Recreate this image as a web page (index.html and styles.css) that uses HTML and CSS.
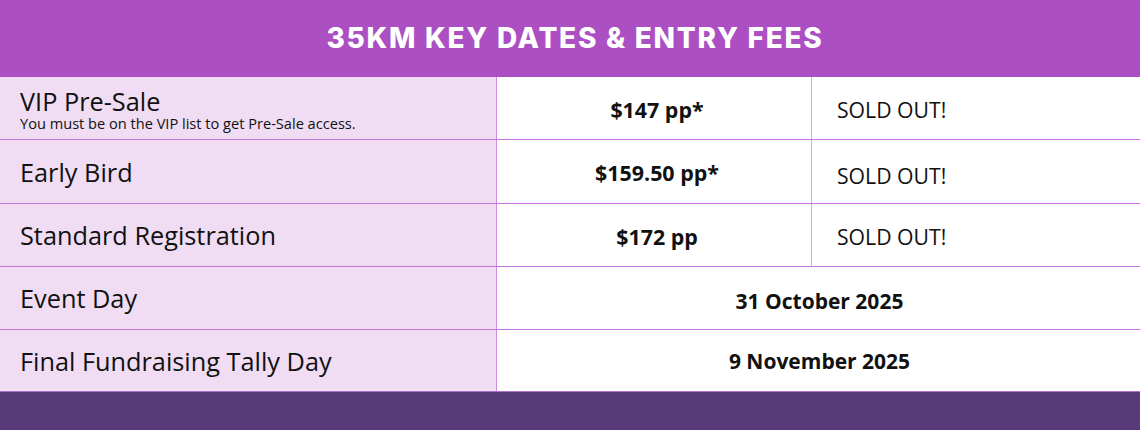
FILE: index.html
```html
<!DOCTYPE html>
<html lang="en">
<head>
<meta charset="utf-8">
<title>35KM Key Dates &amp; Entry Fees</title>
<link rel="stylesheet" href="styles.css">
</head>
<body>
<div class="page">
  <header class="head"><h1>35KM KEY DATES &amp; ENTRY FEES</h1></header>
  <div class="table">
    <div class="row">
      <div class="label first"><div class="main">VIP Pre-Sale</div><div class="note">You must be on the VIP list to get Pre-Sale access.</div></div>
      <div class="price">$147 pp*</div>
      <div class="status">SOLD OUT!</div>
    </div>
    <div class="row">
      <div class="label"><div class="main">Early Bird</div></div>
      <div class="price">$159.50 pp*</div>
      <div class="status low">SOLD OUT!</div>
    </div>
    <div class="row">
      <div class="label"><div class="main">Standard Registration</div></div>
      <div class="price">$172 pp</div>
      <div class="status">SOLD OUT!</div>
    </div>
    <div class="row wide">
      <div class="label"><div class="main">Event Day</div></div>
      <div class="date down">31 October 2025</div>
    </div>
    <div class="row wide last">
      <div class="label"><div class="main">Final Fundraising Tally Day</div></div>
      <div class="date">9 November 2025</div>
    </div>
  </div>
  <footer class="foot"></footer>
</div>
</body>
</html>
```
FILE: styles.css
```css
* { box-sizing: border-box; }
html, body { margin: 0; padding: 0; }
body { width: 1140px; height: 430px; overflow: hidden; background: #ffffff; font-family: "Open Sans", "Liberation Sans", sans-serif; color: #111; }
.page { display: flex; flex-direction: column; height: 430px; }
.head { height: 77px; background: #ab4fc3; display: flex; align-items: center; justify-content: center; padding-left: 10px; }
.head h1 { margin: 0; color: #fff; font-family: Inter, "Liberation Sans", sans-serif; font-weight: 800; font-size: 28px; letter-spacing: 1.75px; padding-bottom: 2px; }
.table { display: flex; flex-direction: column; }
.row { display: grid; grid-template-columns: 497px 315px 1fr; height: 63px; border-bottom: 1px solid #c574db; }
.row:nth-child(2) { height: 64px; }
.row.wide { grid-template-columns: 497px 1fr; }
.row.last { height: 62px; border-bottom: 1px solid #b070c8; }
.label { background: #f0ddf3; border-right: 1px solid #cf8ee0; padding-left: 20px; display: flex; flex-direction: column; justify-content: center; }
.label.first { padding-top: 2px; }
.main { font-size: 25.3px; line-height: 28px; }
.note { font-size: 14.6px; line-height: 16px; }
.price { display: flex; align-items: center; justify-content: center; font-weight: 700; font-size: 21.4px; border-right: 1px solid #d9a6e6; padding-left: 6px; padding-top: 2px; }
.status { display: flex; align-items: center; padding-left: 25px; font-size: 21.2px; padding-top: 2px; }
.status.low { padding-top: 8px; }
.date { display: flex; align-items: center; justify-content: center; font-weight: 700; font-size: 21px; padding-left: 2px; }
.date.down { padding-top: 6px; }
.foot { flex: 1; background: #583a7a; }
```
